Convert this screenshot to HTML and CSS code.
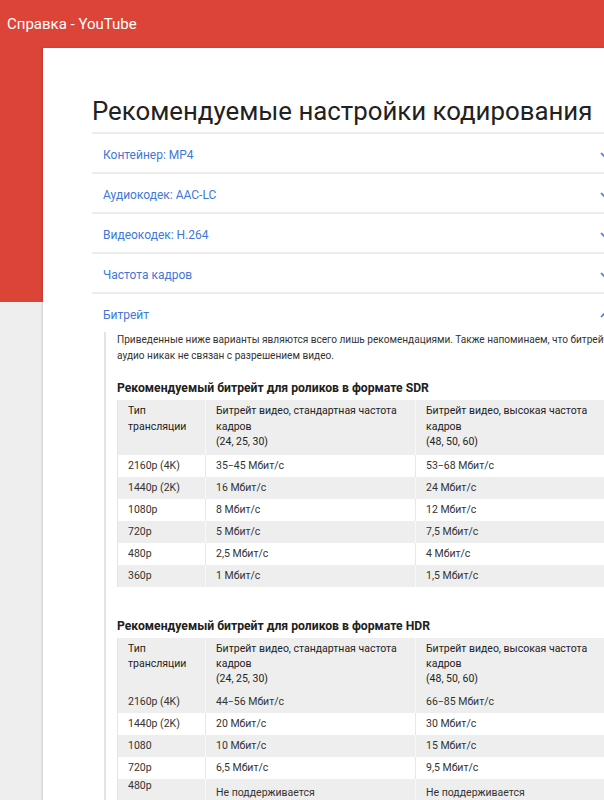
FILE: index.html
```html
<!DOCTYPE html>
<html lang="ru">
<head>
<meta charset="utf-8">
<title>Справка - YouTube</title>
<link rel="stylesheet" href="styles.css">
</head>
<body>
<header class="topbar"><span class="brand">Справка - YouTube</span></header>
<main class="panel">
  <h1 class="title">Рекомендуемые настройки кодирования</h1>
  <div class="accordion">
    <div class="acc-item">
      <div class="acc-head"><span class="acc-label">Контейнер: MP4</span><svg class="chev" viewBox="0 0 12 12" width="12" height="12"><polyline points="2,4 6,8 10,4"/></svg></div>
    </div>
    <div class="acc-item">
      <div class="acc-head"><span class="acc-label">Аудиокодек: AAC-LC</span><svg class="chev" viewBox="0 0 12 12" width="12" height="12"><polyline points="2,4 6,8 10,4"/></svg></div>
    </div>
    <div class="acc-item">
      <div class="acc-head"><span class="acc-label">Видеокодек: H.264</span><svg class="chev" viewBox="0 0 12 12" width="12" height="12"><polyline points="2,4 6,8 10,4"/></svg></div>
    </div>
    <div class="acc-item">
      <div class="acc-head"><span class="acc-label">Частота кадров</span><svg class="chev" viewBox="0 0 12 12" width="12" height="12"><polyline points="2,4 6,8 10,4"/></svg></div>
    </div>
    <div class="acc-item open">
      <div class="acc-head"><span class="acc-label">Битрейт</span><svg class="chev" viewBox="0 0 12 12" width="12" height="12"><polyline points="2,8 6,4 10,8"/></svg></div>
      <div class="acc-body">
        <p class="note">Приведенные ниже варианты являются всего лишь рекомендациями. Также напоминаем, что битрейт аудио никак не связан с разрешением видео.</p>
        <h3 class="sub">Рекомендуемый битрейт для роликов в формате SDR</h3>
        <table class="rates">
          <colgroup><col class="c1"><col class="c2"><col class="c3"></colgroup>
          <thead>
            <tr><th>Тип трансляции</th><th>Битрейт видео, стандартная частота кадров<br>(24, 25, 30)</th><th>Битрейт видео, высокая частота кадров<br>(48, 50, 60)</th></tr>
          </thead>
          <tbody>
            <tr><td>2160p (4K)</td><td>35−45 Мбит/с</td><td>53−68 Мбит/с</td></tr>
            <tr class="alt"><td>1440p (2K)</td><td>16 Мбит/с</td><td>24 Мбит/с</td></tr>
            <tr><td>1080p</td><td>8 Мбит/с</td><td>12 Мбит/с</td></tr>
            <tr class="alt"><td>720p</td><td>5 Мбит/с</td><td>7,5 Мбит/с</td></tr>
            <tr><td>480p</td><td>2,5 Мбит/с</td><td>4 Мбит/с</td></tr>
            <tr class="alt"><td>360p</td><td>1 Мбит/с</td><td>1,5 Мбит/с</td></tr>
          </tbody>
        </table>
        <h3 class="sub sub-gap">Рекомендуемый битрейт для роликов в формате HDR</h3>
        <table class="rates rates-hdr">
          <colgroup><col class="c1"><col class="c2"><col class="c3"></colgroup>
          <thead>
            <tr><th>Тип трансляции</th><th>Битрейт видео, стандартная частота кадров<br>(24, 25, 30)</th><th>Битрейт видео, высокая частота кадров<br>(48, 50, 60)</th></tr>
          </thead>
          <tbody>
            <tr class="alt"><td>2160p (4K)</td><td>44−56 Мбит/с</td><td>66−85 Мбит/с</td></tr>
            <tr><td>1440p (2K)</td><td>20 Мбит/с</td><td>30 Мбит/с</td></tr>
            <tr class="alt"><td>1080</td><td>10 Мбит/с</td><td>15 Мбит/с</td></tr>
            <tr><td>720p</td><td>6,5 Мбит/с</td><td>9,5 Мбит/с</td></tr>
            <tr class="alt"><td class="high">480p</td><td class="low">Не поддерживается</td><td class="low">Не поддерживается</td></tr>
          </tbody>
        </table>
      </div>
    </div>
  </div>
</main>
</body>
</html>
```
FILE: styles.css
```css
html, body {
  margin: 0;
  padding: 0;
  overflow: hidden;
}
body {
  background: #eeeeee;
  font-family: Roboto, "Noto Sans", Arial, sans-serif;
  color: #333;
  width: 604px;
  height: 800px;
}
.topbar {
  background: #db4437;
  height: 302px;
  box-sizing: border-box;
  padding: 15px 0 0 7px;
}
.brand {
  color: #fff;
  font-size: 15px;
  line-height: 18px;
  display: block;
}
.panel {
  display: block;
  margin: -254px 0 0 43px;
  width: 640px;
  min-height: 760px;
  background: #fff;
  box-shadow: -1px 0 2px rgba(0,0,0,0.12);
  padding: 47px 0 0 49px;
  box-sizing: border-box;
}
.title {
  margin: 0;
  width: 560px;
  font-size: 25.8px;
  font-weight: 400;
  line-height: 32px;
  color: #212121;
  padding-bottom: 5px;
  border-bottom: 2px solid #ececec;
  white-space: nowrap;
}
.accordion {
  width: 550px;
}
.acc-item {
  border-bottom: 2px solid #ececec;
}
.acc-item.open {
  border-bottom: none;
}
.acc-head {
  display: flex;
  justify-content: space-between;
  align-items: center;
  padding: 14px 31px 10px 11px;
  height: 14px;
}
.acc-label {
  font-size: 12px;
  line-height: 14px;
  color: #3d78d8;
}
.chev {
  fill: none;
  stroke: #4f7cc4;
  stroke-width: 1.6;
}
.acc-body {
  margin-left: 12px;
  border-left: 2px solid #e3e3e3;
  padding: 0 25px 40px 11px;
}
.note {
  margin: 0;
  font-size: 10.1px;
  line-height: 16px;
  color: #333;
}
.sub {
  margin: 16px 0 4px;
  font-size: 12.2px;
  line-height: 16px;
  font-weight: 700;
  color: #212121;
  white-space: nowrap;
}
.sub-gap {
  margin-top: 31px;
}
.rates {
  width: 497px;
  table-layout: fixed;
  border-collapse: collapse;
  font-size: 10.5px;
  color: #333;
  border-left: 1px solid #e4e4e4;
}
.c1 { width: 88px; }
.c2 { width: 210px; }
.rates th {
  background: #eeeeee;
  font-weight: 400;
  color: #222;
  text-align: left;
  vertical-align: top;
  padding: 3px 10px 5px;
  line-height: 15.5px;
  height: 47px;
  border-left: 1px solid #f8f8f8;
}
.rates-hdr th {
  line-height: 15px;
  height: 43px;
}
.rates th:first-child,
.rates td:first-child {
  border-left: none;
}
.rates td {
  padding: 4px 10px;
  line-height: 14px;
  height: 14px;
  vertical-align: top;
  border-left: 1px solid #e8e8e8;
  white-space: nowrap;
}
.rates tr.alt td {
  background: #eeeeee;
  border-left-color: #f8f8f8;
}
.rates td.high {
  padding-top: 0;
}
.rates td.low {
  padding-top: 7px;
}
```
